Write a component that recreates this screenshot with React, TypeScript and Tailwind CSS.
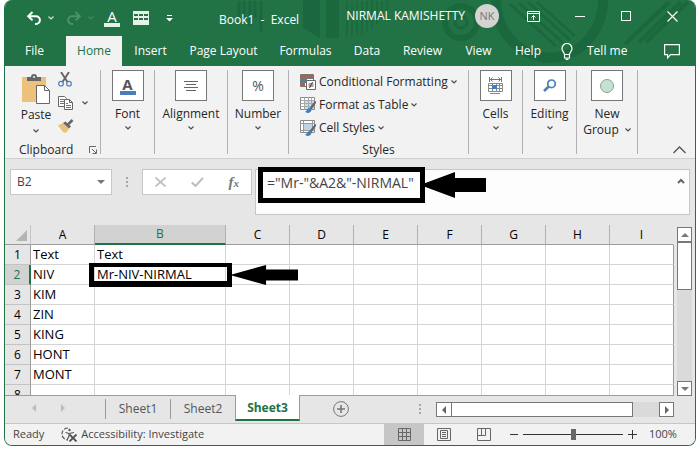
import type { ReactNode } from 'react';

const tabs = [
  { name: 'File', width: 'w-[59px]' },
  { name: 'Home', width: 'w-14' },
  { name: 'Insert', width: 'w-[57px]' },
  { name: 'Page Layout', width: 'w-[89px]' },
  { name: 'Formulas', width: 'w-[75px]' },
  { name: 'Data', width: 'w-12' },
  { name: 'Review', width: 'w-[63px]' },
  { name: 'View', width: 'w-[49px]' },
  { name: 'Help', width: 'w-[50px]' },
];

const columns = ['A', 'B', 'C', 'D', 'E', 'F', 'G', 'H', 'I'];

const rows: string[][] = [
  ['Text', 'Text'],
  ['NIV', 'Mr-NIV-NIRMAL'],
  ['KIM'],
  ['ZIN'],
  ['KING'],
  ['HONT'],
  ['MONT'],
];

function Chevron({ className = '' }: { className?: string }) {
  return (
    <svg viewBox="0 0 6 4" className={`h-1 w-1.5 shrink-0 opacity-80 ${className}`} fill="none" stroke="currentColor" strokeWidth="1.2">
      <path d="M.5 .5 3 3 5.500 .5" />
    </svg>
  );
}

function TitlePattern() {
  return (
    <svg className="pointer-events-none absolute top-0 right-0 h-[66px] w-[690px]" viewBox="0 0 690 66" fill="none" stroke="#1c683e">
      <path strokeWidth="3" d="M234 1v17M239 1v17M245 1v25M250 1v17M256 1v31" />
      <path fill="#1c683e" stroke="none" d="M298 0h17v38l-17-10zM321 0h13v38h-13z" />
      <path strokeWidth="1.5" d="M342 1v36M347 1v36M352 1v35M357 1v33M362 1v30M367 1v27M372 1v23M377 1v18M382 1v12" />
      <circle cx="456" cy="22" r="16" strokeWidth="6" />
      <circle cx="456" cy="22" r="6" strokeWidth="3" />
      <path strokeWidth="10" d="M491 0a52 56 0 0 0 107 0" />
      <path strokeWidth="3" d="m505 4 46 42M514 3l44 40M523 2l42 38M532 2l38 34" />
      <path strokeWidth="4" d="M620 44 664 2M634 42l42-40M641 42l42-40" />
    </svg>
  );
}

function TitleBar() {
  return (
    <div className="relative flex h-9 items-center">
      <button aria-label="Undo" className="ml-[21px]">
        <svg viewBox="0 0 16 16" className="size-4" fill="none" stroke="#fff" strokeWidth="2">
          <path d="M6.500 2 2.200 6.200l4.300 4.200M2.500 6.200H10a3.900 3.900 0 0 1 0 7.800H9" />
        </svg>
      </button>
      <button aria-label="Undo history" className="ml-1.5 text-white">
        <Chevron />
      </button>
      <button aria-label="Redo" className="ml-3">
        <svg viewBox="0 0 16 16" className="size-4" fill="none" stroke="#4c9169" strokeWidth="2">
          <path d="m9.500 2 4.300 4.200-4.300 4.200M13.500 6.200H6a3.900 3.900 0 0 0 0 7.800h1" />
        </svg>
      </button>
      <button aria-label="Redo history" className="ml-1.5 text-[#4c9169]">
        <Chevron />
      </button>
      <button aria-label="Font colour" className="ml-2.5 flex flex-col items-center text-[15px] leading-[14px] text-white">
        A<span className="h-1 w-4 bg-[#e4f2e8]" />
      </button>
      <button aria-label="Table" className="ml-[13px]">
        <svg viewBox="0 0 16 14" className="h-3.5 w-4">
          <path fill="#e4f2e8" d="M0 0h16v14H0z" />
          <path fill="#217346" d="M1 3h4v2H1zM6 3h4v2H6zM11 3h4v2h-4zM1 7h4v2H1zM6 7h4v2H6zM11 7h4v2h-4z" />
        </svg>
      </button>
      <button aria-label="Customize toolbar" className="ml-[17px]">
        <svg viewBox="0 0 7 7" className="size-[7px]" fill="#fff">
          <path d="M1 0h5v1H1zM0 3h7L3.500 6.500z" />
        </svg>
      </button>
      <h1 className="ml-[46px] pt-1 text-[12px] whitespace-pre text-white">Book1  -  Excel</h1>
      <div className="ml-auto flex items-center self-start pr-[17px]">
        <span className="text-[12px] leading-8 whitespace-nowrap text-white">NIRMAL KAMISHETTY</span>
        <button className="ml-2.5 size-6 rounded-full bg-[#d4d4d4] text-[11px] text-[#777]">NK</button>
        <button aria-label="Ribbon display options" className="ml-7">
          <svg viewBox="0 0 13 11" className="h-[11px] w-[13px]" fill="none" stroke="#fff">
            <path d="M.5 .5h12v10H.5zM.5 2.500h12M6.500 9V4.500M4.500 6.500l2-2 2 2" />
          </svg>
        </button>
        <button aria-label="Minimize" className="ml-[35px] h-px w-2.5 bg-white" />
        <button aria-label="Maximize" className="ml-9 size-2.5 border border-white" />
        <button aria-label="Close" className="ml-9">
          <svg viewBox="0 0 11 11" className="size-[11px]" stroke="#fff" strokeWidth="1.200">
            <path d="m.5 .5 10 10M10.500 .5l-10 10" />
          </svg>
        </button>
      </div>
    </div>
  );
}

function RibbonTabs() {
  return (
    <nav className="relative flex h-[30px] items-center text-[12px] text-white">
      {tabs.map((tab) => (
        <button
          key={tab.name}
          className={`h-full shrink-0 whitespace-nowrap ${tab.width} ${tab.name === 'Home' ? 'ml-0.5 bg-[#f2f2f2] text-[#217346]' : ''}`}
        >
          {tab.name}
        </button>
      ))}
      <button className="ml-2 flex items-center gap-3.5 whitespace-nowrap">
        <svg viewBox="0 0 12 17" className="h-[17px] w-3" fill="none" stroke="#fff" strokeWidth="1.200">
          <path d="M3.500 11.500C3.500 9.500 1 8.500 1 5.500a5 5 0 0 1 10 0c0 3-2.500 4-2.500 6zM3.500 11.500v3.500h5v-3.500M4.500 16.400h3" />
        </svg>
        Tell me
      </button>
      <button aria-label="Comments" className="mr-[15px] ml-auto">
        <svg viewBox="0 0 16 15" className="h-[15px] w-4" fill="none" stroke="#fff" strokeWidth="1.200">
          <path d="M.6 .6h14.800v10H6.500L3.600 13.800V10.600h-3z" />
        </svg>
      </button>
    </nav>
  );
}

function Group({ label, width, children }: { label: ReactNode; width: string; children: ReactNode }) {
  return (
    <div className={`shrink-0 border-r border-[#b1b1b1] ${width}`}>
      <button className="flex w-full flex-col items-center whitespace-nowrap">
        <span className="flex h-[31px] w-8 items-center justify-center border border-[#777] bg-white">{children}</span>
        {label}
      </button>
    </div>
  );
}

function GroupLabel({ children }: { children: string }) {
  return (
    <>
      <span className="mt-[5px] leading-4">{children}</span>
      <Chevron className="mt-1" />
    </>
  );
}

function ScissorsIcon() {
  return (
    <svg viewBox="0 0 14 15" className="h-[15px] w-3.5" fill="none">
      <path d="m3 0 6.500 10M11 0 4.500 10" stroke="#666" strokeWidth="1.900" />
      <circle cx="3" cy="11.700" r="2.300" stroke="#4a7ebb" strokeWidth="1.200" />
      <circle cx="11" cy="11.700" r="2.300" stroke="#4a7ebb" strokeWidth="1.200" />
    </svg>
  );
}

function CopyIcon() {
  return (
    <svg viewBox="0 0 16 14" className="h-3.5 w-4" fill="#fff" stroke="#666">
      <path d="M.5 .5h6l2 2v8h-8z" />
      <path d="M2 3.500h4M2 5.500h4M2 7.500h4" stroke="#4a7ebb" />
      <path d="M6.500 3.500h5l3 3v7h-8zM11.500 3.500v3h3" />
      <path d="M8 7.500h2M8 9.500h5M8 11.500h5" stroke="#4a7ebb" />
    </svg>
  );
}

function BrushIcon() {
  return (
    <svg viewBox="0 0 16 14" className="h-3.5 w-4">
      <path d="M0 6.500 5 4l6 5.500-3 4.500-3-1z" fill="#ecc17c" />
      <path d="M5 4 7.500 2.500l5.500 5L11 9.500z" fill="#666" />
      <path d="m10 5.500 4.500-4.500" stroke="#666" strokeWidth="2.500" />
    </svg>
  );
}

function PasteIcon() {
  return (
    <svg viewBox="0 0 28 31" className="h-[31px] w-7">
      <path d="M0 3h24v25H0z" fill="#ecc17c" />
      <path d="M5 7V3h4a3 3 0 0 1 6 0h4v4z" fill="#666" />
      <circle cx="12" cy="3" r="1" fill="#f2f2f2" />
      <path d="M14.500 11.500h8l5 5v13h-13z" fill="#fff" stroke="#666" />
      <path d="M22.500 11.500v5h5" fill="none" stroke="#666" />
    </svg>
  );
}

function ConditionalIcon() {
  return (
    <svg viewBox="0 0 16 16" className="size-4">
      <path d="M.5 .5h13v12H.5z" fill="#fff" stroke="#777" />
      <path d="M1 1h5v3H1zM1 9h4v3H1z" fill="#c8553d" />
      <path d="M7 1h6v3H7z" fill="#c8553d" />
      <path d="M1 5h5v3H1z" fill="#4a7ebb" />
      <path d="M.5 4.500h13M.5 8.500h6M6.500 .5v12M10.500 .5v4" stroke="#777" />
      <path d="M6.500 6.500h9v9h-9z" fill="#fff" stroke="#666" />
      <path d="M8.500 10h5M8.500 12h5M12.500 8l-3 6" stroke="#444" />
    </svg>
  );
}

function TableBrushIcon({ cellStyles = false }: { cellStyles?: boolean }) {
  return (
    <svg viewBox="0 0 16 16" className="size-4">
      <path d="M.5 .5h14v12H.5z" fill="#fff" stroke="#888" />
      {cellStyles ? (
        <>
          <path d="M4 4h8v6H4z" fill="#bcd3e8" />
          <path d="M.5 3.500h14M3.500 .5v12M.5 10.500h14M12.500 .5v8" stroke="#999" />
        </>
      ) : (
        <>
          <path d="M5 4h9v8H5z" fill="#c9dced" />
          <path d="M.5 3.500h14M.5 6.500h14M.5 9.500h14M4.500 .5v12M8.500 .5v12M11.500 .5v12" stroke="#aaa" />
        </>
      )}
      <path d="m9.500 11 5-6.500 1.500-.5v2l-4.500 6.500z" fill="#666" />
      <path d="M5 14.500c2 0 2.500-4 5-3.500 2.500 1 1.500 4.500-1.500 4.900-2 .1-3-.400-3.500-1.400z" fill="#3f7fc1" />
    </svg>
  );
}

function Ribbon() {
  const styleItems = [
    { name: 'Conditional Formatting', icon: <ConditionalIcon /> },
    { name: 'Format as Table', icon: <TableBrushIcon /> },
    { name: 'Cell Styles', icon: <TableBrushIcon cellStyles /> },
  ];

  return (
    <section className="flex border-b border-[#cfcfcf] bg-[#f2f2f2] pt-1 pb-1 text-[12px] text-[#262626]">
      <div className="flex h-[84px] w-24 shrink-0 flex-col border-r border-[#b1b1b1]">
        <div className="flex flex-1 pl-[15px]">
          <button className="flex w-8 flex-col items-center pt-1">
            <PasteIcon />
            <span className="mt-0.5 leading-4">Paste</span>
            <Chevron className="mt-1.5" />
          </button>
          <div className="ml-1.5 flex flex-col items-start gap-[9px] pt-0.5">
            <button aria-label="Cut"><ScissorsIcon /></button>
            <button aria-label="Copy" className="flex items-center gap-2"><CopyIcon /><Chevron /></button>
            <button aria-label="Format painter"><BrushIcon /></button>
          </div>
        </div>
        <div className="-mb-1 flex items-center justify-between pr-[3px] pl-3.5 leading-4">
          Clipboard
          <button aria-label="Clipboard options">
            <svg viewBox="0 0 8 8" className="size-2" fill="none" stroke="#666">
              <path d="M.5 7V.5H7M3 3l4 4M7.500 3.500v4h-4" />
            </svg>
          </button>
        </div>
      </div>
      <Group width="w-[54px]" label={<GroupLabel>Font</GroupLabel>}>
        <span className="flex flex-col items-center text-[15px] leading-[14px] font-bold text-[#555]">
          A<span className="h-1 w-4 bg-[#4a7ebb]" />
        </span>
      </Group>
      <Group width="w-[73px]" label={<GroupLabel>Alignment</GroupLabel>}>
        <svg viewBox="0 0 14 10" className="h-2.5 w-3.5" stroke="#666">
          <path d="M0 .5h14M2 3.500h10M0 6.500h14M2 9.500h10" />
        </svg>
      </Group>
      <Group width="w-[61px]" label={<GroupLabel>Number</GroupLabel>}>
        <span className="text-[14px] text-[#555]">%</span>
      </Group>
      <div className="flex h-[84px] w-[180px] shrink-0 flex-col border-r border-[#b1b1b1] pl-[11px]">
        {styleItems.map((item) => (
          <button key={item.name} className="flex h-[23px] shrink-0 items-center gap-[3px] self-start whitespace-nowrap">
            {item.icon}
            {item.name}
            <Chevron />
          </button>
        ))}
        <span className="mt-auto -mb-1 pr-[11px] text-center leading-4">Styles</span>
      </div>
      <Group width="w-[54px]" label={<GroupLabel>Cells</GroupLabel>}>
        <svg viewBox="0 0 16 17" className="h-[17px] w-4" fill="none">
          <path d="M1.500 0v5M13.500 0v5M2 2.500h11M4.500 .5l-2 2 2 2M10.500 .5l2 2-2 2" stroke="#4a7ebb" />
          <path d="M.5 6.500h14v8H.5zM.5 8.500h14M.5 11.500h14M4.500 6.500v8M8.500 6.500v8M11.500 6.500v8M2 16.500h10" stroke="#888" />
          <path d="M4 8h5v4H4z" fill="#3f7fc1" />
        </svg>
      </Group>
      <Group width="w-[54px]" label={<GroupLabel>Editing</GroupLabel>}>
        <svg viewBox="0 0 14 13" className="h-[13px] w-3.5" fill="none" stroke="#4a7ebb">
          <circle cx="8.500" cy="4.800" r="3.800" strokeWidth="1.700" />
          <path d="M5.800 7.500 1 12" strokeWidth="2.500" />
        </svg>
      </Group>
      <Group
        width="w-[61px]"
        label={
          <span className="mt-[5px] leading-4">
            New
            <span className="flex items-center gap-1.5">Group <Chevron /></span>
          </span>
        }
      >
        <span className="size-3.5 rounded-full border border-[#82a594] bg-[#c8e0d4]" />
      </Group>
      <button aria-label="Collapse ribbon" className="mr-[9px] ml-auto self-end">
        <svg viewBox="0 0 13 8" className="h-2 w-[13px]" fill="none" stroke="#555" strokeWidth="1.300">
          <path d="m.5 7 6-6 6 6" />
        </svg>
      </button>
    </section>
  );
}

function FormulaBar() {
  return (
    <div className="flex items-start px-[5px] pt-2.5 pb-2.5 text-[#444]">
      <div className="flex h-[26px] w-[102px] shrink-0 items-center border border-[#c6c6c6] bg-white pr-1.5">
        <input aria-label="Name box" defaultValue="B2" className="w-0 flex-1 pl-1.5 text-[12px] outline-none" />
        <button aria-label="Named ranges" className="border-x-4 border-t-4 border-x-transparent border-t-[#777]" />
      </div>
      <Dots className="mt-2 ml-[14px]" />
      <div className="ml-3.5 flex h-[26px] w-[110px] shrink-0 items-center justify-between border border-[#c6c6c6] bg-white pr-3 pl-3">
        <button aria-label="Cancel">
          <svg viewBox="0 0 11 10" className="h-2.5 w-[11px]" stroke="#bdbdbd" strokeWidth="1.600">
            <path d="m.5 .5 10 9M10.500 .5l-10 9" />
          </svg>
        </button>
        <button aria-label="Enter">
          <svg viewBox="0 0 13 10" className="h-2.5 w-[13px]" fill="none" stroke="#bdbdbd" strokeWidth="2">
            <path d="M.8 5.500 4.500 9 12 .8" />
          </svg>
        </button>
        <button aria-label="Insert function" className="font-['Liberation_Serif',serif] text-[15px] leading-4 font-bold text-[#777] italic">
          f<span className="text-[11px]">x</span>
        </button>
      </div>
      <div className="relative ml-[3px] flex h-[46px] flex-1 items-start border border-[#c6c6c6] bg-[#fdfdfd] pr-1">
        <input
          aria-label="Formula"
          defaultValue={'="Mr-"&A2&"-NIRMAL"'}
          className="h-6 w-0 flex-1 pl-[11px] text-[14px] outline-none"
        />
        <button aria-label="Collapse formula bar" className="mt-2">
          <svg viewBox="0 0 8 6" className="h-1.5 w-2" fill="none" stroke="#666" strokeWidth="2">
            <path d="m1 5 3-3 3 3" />
          </svg>
        </button>
        <div className="pointer-events-none absolute top-[-3px] left-0.5 h-9 w-[167px] border-[5px] border-black" />
        <Arrow className="top-0.5 left-[164px] h-[26px] w-[66px]" />
      </div>
    </div>
  );
}

function Arrow({ className }: { className: string }) {
  return (
    <svg viewBox="0 0 66 26" preserveAspectRatio="none" className={`pointer-events-none absolute ${className}`}>
      <path d="M0 13 35 0v6h31v14H35v6z" />
    </svg>
  );
}

function Dots({ className = '' }: { className?: string }) {
  return (
    <svg viewBox="0 0 2 10" className={`h-2.5 w-0.5 shrink-0 ${className}`} fill="#a6a6a6">
      <path d="M0 0h2v2H0zM0 4h2v2H0zM0 8h2v2H0z" />
    </svg>
  );
}

function Sheet() {
  return (
    <div className="flex gap-[3px] pr-[3px]">
      <div className="min-w-0 flex-1 border-b border-[#9b9b9b]">
        <table className="w-full table-fixed border-separate border-spacing-0 bg-white text-[13px] leading-[19px] text-black">
          <colgroup>
            <col className="w-[26px]" />
            <col className="w-16" />
            <col className="w-[131px]" />
            {columns.slice(2).map((c) => <col key={c} />)}
          </colgroup>
          <thead>
            <tr className="bg-[#e6e6e6]">
              <th className="border-r border-b border-r-[#c4c4c4] border-b-[#9b9b9b] p-0">
                <svg viewBox="0 0 11 11" className="mt-0.5 mr-[3px] ml-auto size-[11px]" fill="#b4b4b4">
                  <path d="M11 0v11H0z" />
                </svg>
              </th>
              {columns.map((c) => (
                <th
                  key={c}
                  scope="col"
                  className={`border-r border-r-[#b0b0b0] p-0 text-[12px] font-normal last:border-r-transparent ${
                    c === 'B'
                      ? 'border-b-2 border-b-[#217346] bg-[#d2d2d2] leading-[18px] text-[#217346]'
                      : 'border-b border-b-[#9b9b9b] leading-[19px]'
                  }`}
                >
                  {c}
                </th>
              ))}
            </tr>
          </thead>
          <tbody>
            {rows.map((row, i) => (
              <tr key={i}>
                <th
                  scope="row"
                  className={`border-b border-b-[#c4c4c4] p-0 text-[12px] leading-[19px] font-normal ${
                    i === 1 ? 'border-r-2 border-r-[#217346] bg-[#d2d2d2] text-[#217346]' : 'border-r border-r-[#9b9b9b] bg-[#e6e6e6]'
                  }`}
                >
                  {i + 1}
                </th>
                {columns.map((c, j) => (
                  <td
                    key={c}
                    className={`border-r border-b border-[#d4d4d4] py-0 pr-0 pl-0.5 whitespace-nowrap last:border-r-[#9b9b9b] ${
                      i === 1 && j === 1 ? 'relative z-10' : ''
                    }`}
                  >
                    {row[j]}
                    {i === 1 && j === 1 && (
                      <>
                        <div className="pointer-events-none absolute -top-0.5 -left-1.5 h-6 w-[143px] border-x-[5px] border-t-4 border-b-[6px] border-black" />
                        <Arrow className="top-0 left-[135px] h-5 w-[68px]" />
                      </>
                    )}
                  </td>
                ))}
              </tr>
            ))}
            <tr>
              <th scope="row" className="border-r border-[#9b9b9b] bg-[#e6e6e6] p-0 text-[12px] font-normal">
                <div className="h-2.5 overflow-hidden leading-[19px]">8</div>
              </th>
              {columns.map((c) => <td key={c} className="border-r border-[#d4d4d4] p-0 last:border-r-[#9b9b9b]" />)}
            </tr>
          </tbody>
        </table>
      </div>
      <div className="mt-0.5 flex w-[15px] flex-col bg-[#dadada]">
        <button aria-label="Scroll up" className="flex h-[15px] items-center justify-center border border-[#777] bg-white">
          <span className="border-x-4 border-b-4 border-x-transparent border-b-[#777]" />
        </button>
        <div className="h-12 border border-[#777] bg-white" />
        <button aria-label="Scroll down" className="mt-auto flex h-[15px] items-center justify-center border border-[#777] bg-white">
          <span className="border-x-4 border-t-4 border-x-transparent border-t-[#777]" />
        </button>
      </div>
    </div>
  );
}

function SheetTabs() {
  return (
    <div className="flex h-[27px] items-start text-[12px] text-[#555]">
      <button aria-label="Previous sheet" className="mt-2 ml-[27px] border-y-4 border-r-4 border-y-transparent border-r-[#bdbdbd]" />
      <button aria-label="Next sheet" className="mt-2 ml-[25px] border-y-4 border-l-4 border-y-transparent border-l-[#bdbdbd]" />
      <button className="mt-[3px] ml-10 h-5 w-[65px] shrink-0 border-l border-[#9b9b9b]">Sheet1</button>
      <button className="mt-[3px] h-5 w-[65px] shrink-0 border-l border-[#9b9b9b]">Sheet2</button>
      <button className="relative -mt-px h-[26px] w-[65px] shrink-0 border-x border-b-2 border-x-[#9b9b9b] border-b-[#217346] bg-white pt-0.5 font-bold text-[#217346]">
        Sheet3
      </button>
      <button aria-label="New sheet" className="mt-[5px] ml-[33px]">
        <svg viewBox="0 0 16 16" className="size-4" fill="none" stroke="#777">
          <circle cx="8" cy="8" r="7.400" />
          <path d="M4 8h8M8 4v8" strokeWidth="1.600" />
        </svg>
      </button>
      <Dots className="mt-2 ml-auto" />
      <div className="mt-1.5 mr-[21px] ml-[15px] flex h-[15px] w-[238px] bg-[#dadada]">
        <button aria-label="Scroll left" className="flex w-4 items-center justify-center border border-[#777] bg-white">
          <span className="border-y-4 border-r-4 border-y-transparent border-r-[#666]" />
        </button>
        <div className="-ml-px w-[182px] border border-[#777] bg-white" />
        <button aria-label="Scroll right" className="ml-auto flex w-[15px] items-center justify-center border border-[#777] bg-white">
          <span className="border-y-4 border-l-4 border-y-transparent border-l-[#666]" />
        </button>
      </div>
    </div>
  );
}

function StatusBar() {
  return (
    <footer className="flex h-[22px] items-center border-t border-[#c6c6c6] bg-[#f2f2f2] text-[11px] text-[#444]">
      <span className="ml-2">Ready</span>
      <button className="ml-[17px] flex items-center gap-[3px] whitespace-nowrap">
        <svg viewBox="0 0 17 15" className="h-[15px] w-[17px]" fill="none" stroke="#555" strokeWidth="1.200">
          <path d="M7 1a6 6 0 0 0 0 12" strokeDasharray="4 1.500" />
          <circle cx="8.500" cy="3" r="1.200" fill="#555" stroke="none" />
          <path d="M4.500 5.500 8 6.500l5-1M8 6.500V9l-2 4" />
          <path d="m8.500 7.500 7 7M15.500 7.500l-7 7" strokeWidth="1.800" />
        </svg>
        Accessibility: Investigate
      </button>
      <div className="ml-auto flex h-full items-center">
        <button aria-label="Normal view" className="flex h-full w-10 items-center justify-center bg-[#c6c6c6]">
          <svg viewBox="0 0 13 13" className="size-[13px]" fill="none" stroke="#666">
            <path d="M.5 .5h12v12H.5zM4.500 .5v12M8.500 .5v12M.5 4.500h12M.5 8.500h12" />
          </svg>
        </button>
        <button aria-label="Page layout view" className="flex h-full w-10 items-center justify-center">
          <svg viewBox="0 0 14 13" className="h-[13px] w-3.5" fill="none" stroke="#666">
            <path d="M.5 .5h13v12H.5zM3.500 2.500h7v8h-7zM5 4.500h4M5 6.500h4M5 8.500h4" />
          </svg>
        </button>
        <button aria-label="Page break preview" className="flex h-full w-10 items-center justify-center">
          <svg viewBox="0 0 14 13" className="h-[13px] w-3.5" fill="none" stroke="#666">
            <path d="M.5 .5h13v12H.5zM.5 7.500h8v-7M4.500 .5v7" />
          </svg>
        </button>
      </div>
      <button aria-label="Zoom out" className="ml-1.5 h-px w-2 bg-[#333]" />
      <input
        type="range"
        aria-label="Zoom"
        defaultValue={50}
        className="ml-[5px] h-3 w-[100px] appearance-none bg-[linear-gradient(#333,#333)] bg-[length:100%_1px] bg-center bg-no-repeat [&::-webkit-slider-thumb]:h-[11px] [&::-webkit-slider-thumb]:w-[5px] [&::-webkit-slider-thumb]:appearance-none [&::-webkit-slider-thumb]:bg-[#666]"
      />
      <button aria-label="Zoom in" className="ml-[5px]">
        <svg viewBox="0 0 9 9" className="size-[9px]" stroke="#333">
          <path d="M0 4.500h9M4.500 0v9" />
        </svg>
      </button>
      <span className="ml-3 w-[46px]">100%</span>
    </footer>
  );
}

export default function App() {
  return (
    <main className="bg-white pr-1 pl-1 font-['Open_Sans','Noto_Sans',sans-serif]">
      <div className="overflow-hidden rounded-lg border-x border-b border-[#217346] bg-[#e6e6e6]">
        <header className="relative bg-[#217346]">
          <TitlePattern />
          <TitleBar />
          <RibbonTabs />
        </header>
        <Ribbon />
        <FormulaBar />
        <Sheet />
        <SheetTabs />
        <StatusBar />
      </div>
    </main>
  );
}
